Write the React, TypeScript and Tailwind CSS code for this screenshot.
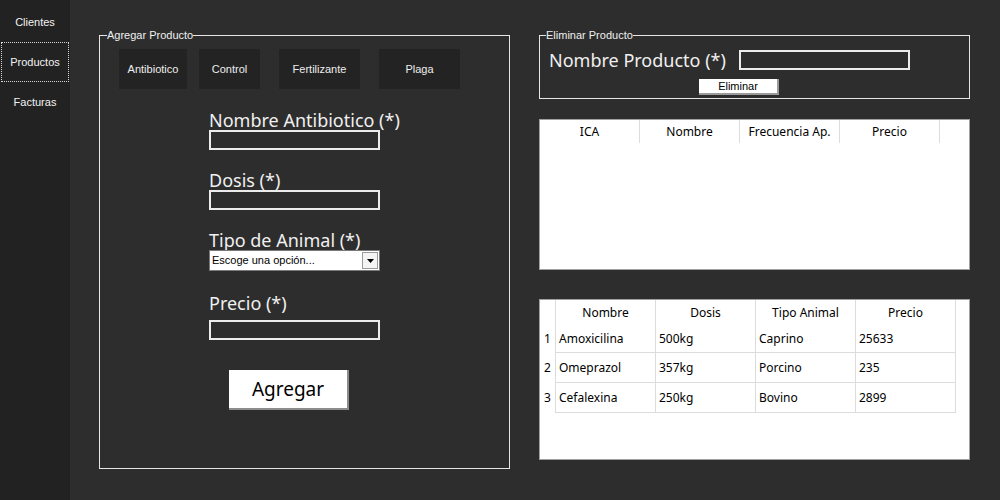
const font = { fontFamily: '"Noto Sans", "Open Sans", sans-serif' };
const small = { fontFamily: '"Liberation Sans", Arial, sans-serif' };

const productos = [
  { nombre: "Amoxicilina", dosis: "500kg", tipo: "Caprino", precio: "25633" },
  { nombre: "Omeprazol", dosis: "357kg", tipo: "Porcino", precio: "235" },
  { nombre: "Cefalexina", dosis: "250kg", tipo: "Bovino", precio: "2899" },
];

function Sidebar() {
  return (
    <div className="w-[70px] shrink-0 bg-[#222222] flex flex-col pt-[2px] text-[11px] text-[#f2f2f2]" style={small}>
      <button className="h-[40px] mx-[1px] flex items-center justify-center border border-transparent">Clientes</button>
      <button className="h-[40px] mx-[1px] flex items-center justify-center border border-dotted border-[#d8d8d8]">Productos</button>
      <button className="h-[40px] mx-[1px] flex items-center justify-center border border-transparent">Facturas</button>
    </div>
  );
}

function Field({ label, top, gap }: { label: string; top: string; gap?: string }) {
  return (
    <div className={`flex flex-col ${top}`}>
      <span className={`text-[18px] leading-[20px] text-[#f0f0f0] ${gap ?? ""}`}>{label}</span>
      <input className="w-[171px] h-[20px] border-2 border-[#ececec] bg-transparent outline-none" />
    </div>
  );
}

function AgregarProducto() {
  return (
    <fieldset className="w-[411px] h-[440px] border border-[#e6e6e6] p-0">
      <legend className="ml-[7px] text-[11px] leading-[13px] text-[#f0f0f0]" style={small}>Agregar Producto</legend>
      <div className="flex mt-[7px] ml-[19px] text-[11px] text-[#eeeeee]" style={small}>
        <button className="w-[68px] h-[40px] bg-[#232323]">Antibiotico</button>
        <button className="w-[61px] h-[40px] bg-[#232323] ml-[12px]">Control</button>
        <button className="w-[81px] h-[40px] bg-[#232323] ml-[19px]">Fertilizante</button>
        <button className="w-[81px] h-[40px] bg-[#232323] ml-[19px]">Plaga</button>
      </div>
      <div className="ml-[109px] flex flex-col">
        <Field label="Nombre Antibiotico (*)" top="mt-[21px]" />
        <Field label="Dosis (*)" top="mt-[20px]" />
        <div className="flex flex-col mt-[20px]">
          <span className="text-[18px] leading-[20px] text-[#f0f0f0]">Tipo de Animal (*)</span>
          <div className="w-[171px] h-[21px] bg-white border border-[#7a7a7a] flex items-center justify-between pl-[2px] pr-[1px]">
            <span className="text-[11px] text-black" style={small}>Escoge una opción...</span>
            <span className="w-[16px] h-[17px] border border-[#9a9a9a] bg-[#f4f4f4] flex items-center justify-center">
              <svg width="7" height="4" viewBox="0 0 7 4">
                <path d="M0 0 H7 L3.5 4 Z" fill="#000" />
              </svg>
            </span>
          </div>
        </div>
        <Field label="Precio (*)" top="mt-[22px]" gap="mb-[7px]" />
        <button className="mt-[30px] ml-[20px] w-[120px] h-[40px] bg-white text-black text-[19px] border-r-2 border-b-2 border-[#8c8c8c]">
          Agregar
        </button>
      </div>
    </fieldset>
  );
}

function EliminarProducto() {
  return (
    <fieldset className="w-[431px] h-[70px] border border-[#e6e6e6] p-0">
      <legend className="ml-[6px] text-[11px] leading-[13px] text-[#f0f0f0]" style={small}>Eliminar Producto</legend>
      <div className="flex items-center mt-[7px] ml-[9px]">
        <span className="w-[190px] text-[18px] leading-[22px] text-[#f0f0f0]">Nombre Producto (*)</span>
        <input className="w-[171px] h-[20px] border-2 border-[#ececec] bg-transparent outline-none" />
      </div>
      <div className="flex ml-[159px] mt-[8px]">
        <button className="w-[80px] h-[16px] bg-white text-[11px] leading-[14px] text-black border-r-2 border-b-2 border-[#9a9a9a]" style={small}>
          Eliminar
        </button>
      </div>
    </fieldset>
  );
}

function TablaVacia() {
  const cols = ["ICA", "Nombre", "Frecuencia Ap.", "Precio"];
  return (
    <div className="w-[431px] h-[151px] bg-white border border-[#a0a0a0] mt-[20px]">
      <div className="flex h-[23px] text-[12px] text-black">
        {cols.map((c) => (
          <div key={c} className="w-[100px] border-r border-[#dcdcdc] flex items-center justify-center">
            {c}
          </div>
        ))}
      </div>
    </div>
  );
}

function TablaProductos() {
  return (
    <div className="w-[431px] h-[161px] bg-white border border-[#a0a0a0] mt-[29px] text-[12px] text-black">
      <div className="flex h-[25px]">
        <div className="w-[15px]" />
        {["Nombre", "Dosis", "Tipo Animal", "Precio"].map((c) => (
          <div key={c} className="w-[100px] border-l border-[#dcdcdc] flex items-center justify-center">
            {c}
          </div>
        ))}
        <div className="border-l border-[#dcdcdc]" />
      </div>
      {productos.map((p, i) => (
        <div key={p.nombre} className={`flex ${i === 0 ? "h-[28px]" : "h-[30px]"}`}>
          <div className="w-[15px] flex items-center justify-center">{i + 1}</div>
          {[p.nombre, p.dosis, p.tipo, p.precio].map((v, j) => (
            <div key={j} className="w-[100px] border-l border-b border-[#dcdcdc] flex items-center pl-[3px]">
              {v}
            </div>
          ))}
          <div className="border-l border-[#dcdcdc]" />
        </div>
      ))}
    </div>
  );
}

export default function App() {
  return (
    <div className="w-[1000px] h-[500px] flex bg-[#2d2d2d] overflow-hidden" style={font}>
      <Sidebar />
      <div className="flex pl-[29px] pt-[29px] gap-[29px]">
        <AgregarProducto />
        <div className="flex flex-col">
          <EliminarProducto />
          <TablaVacia />
          <TablaProductos />
        </div>
      </div>
    </div>
  );
}
